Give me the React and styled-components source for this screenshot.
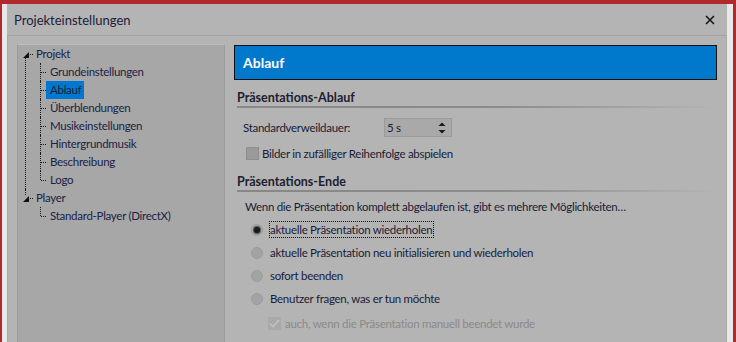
import React from 'react';
import styled, { createGlobalStyle } from 'styled-components';

const Global = createGlobalStyle`
  html, body { margin: 0; padding: 0; background: #b0292d; }
  body {
    font-family: Lato, "Noto Sans", sans-serif;
    font-size: 11.5px;
    letter-spacing: -0.28px;
    color: #181c34;
  }
  * { box-sizing: border-box; }
`;

const Frame = styled.div`
  width: 736px;
  height: 342px;
  background: #b0292d;
  padding: 4px 3px 0 2px;
  overflow: hidden;
`;

const Window = styled.div`
  height: 100%;
  background: #b4b4b4;
  border-left: 5px solid #e8e8e8;
  border-right: 6px solid #e8e8e8;
  display: flex;
  flex-direction: column;
`;

const TitleBar = styled.div`
  height: 31px;
  flex: none;
  display: flex;
  align-items: center;
  justify-content: space-between;
  padding: 0 12px 0 7px;
  font-size: 13px;
  letter-spacing: 0;
  color: #1c2038;
`;

const CloseBtn = styled.span`
  display: flex;
  width: 10px;
  height: 10px;
`;

const Body = styled.div`
  flex: 1;
  border-top: 1px solid #a4a4a4;
  border-left: 1px solid #a8a8a8;
  border-right: 1px solid #a8a8a8;
  padding: 8px 9px 0 9px;
  display: flex;
  gap: 9px;
  align-items: flex-start;
  min-height: 0;
`;

const TreePanel = styled.div`
  width: 208px;
  height: 320px;
  flex: none;
  background: #a7a7a7;
  border: 1px solid #9b9b9b;
  border-top-color: #bdbdbd;
`;

const TreeList = styled.ul`
  list-style: none;
  margin: 0;
  padding: 0;
`;

const RootNode = styled.li`
  position: relative;
  &::before {
    content: "";
    position: absolute;
    left: 7px;
    top: ${p => (p.$last ? '0' : '12px')};
    ${p => (p.$last ? 'height: 6px;' : 'bottom: 0;')}
    border-left: 1px dotted #1a1a1a;
  }
`;

const RootRow = styled.div`
  height: 18px;
  display: flex;
  align-items: center;
  padding-left: 5px;
  position: relative;
`;

const Expander = styled.svg`
  width: 6px;
  height: 6px;
  flex: none;
  position: relative;
  z-index: 1;
  margin-top: 1px;
`;

const Connector = styled.span`
  width: 3px;
  margin-left: 1px;
  border-top: 1px dotted #1a1a1a;
  flex: none;
`;

const ChildNode = styled.li`
  position: relative;
  height: 18px;
  display: flex;
  align-items: center;
  padding-left: 28px;
  &::before {
    content: "";
    position: absolute;
    left: 22px;
    top: 0;
    ${p => (p.$last ? 'height: 9px;' : 'bottom: 0;')}
    border-left: 1px dotted #1a1a1a;
  }
  &::after {
    content: "";
    position: absolute;
    left: 23px;
    top: 9px;
    width: 5px;
    border-top: 1px dotted #1a1a1a;
  }
`;

const NodeLabel = styled.span`
  height: 18px;
  line-height: 18px;
  padding: 0 3px 0 4px;
  margin-left: ${p => (p.$root ? '-1px' : '0')};
  background: ${p => (p.$selected ? '#0078d2' : 'transparent')};
  color: ${p => (p.$selected ? '#181c34' : '#1a2246')};
  white-space: nowrap;
`;

const Main = styled.div`
  width: 483px;
  flex: none;
  margin-top: 1px;
  display: flex;
  flex-direction: column;
`;

const Banner = styled.div`
  height: 35px;
  border: 1px solid #101010;
  background: #0079cc;
  color: #fff;
  font-weight: 700;
  font-size: 14px;
  letter-spacing: 0;
  display: flex;
  align-items: center;
  padding-left: 8px;
`;

const SectionTitle = styled.div`
  margin-top: ${p => p.$mt}px;
  margin-left: 3px;
  line-height: 15px;
  font-size: 12.5px;
  letter-spacing: 0;
  font-weight: 700;
  color: #1e2030;
  &::after {
    content: "";
    display: block;
    height: 2px;
    margin-top: 1px;
    background: linear-gradient(to right, #878787 0%, #8c8c8c 55%, #b4b4b4 100%);
  }
`;

const FieldRow = styled.div`
  margin-top: 10px;
  padding-left: 9px;
  display: flex;
  align-items: center;
  height: 19px;
`;

const FieldLabel = styled.span`
  width: 141px;
  flex: none;
`;

const Spinner = styled.div`
  width: 68px;
  height: 19px;
  background: #a9a9a9;
  border: 1px solid #9a9a9a;
  display: flex;
  align-items: center;
  justify-content: space-between;
  padding: 0 5px 0 2px;
`;

const CheckRow = styled.label`
  margin-top: ${p => p.$mt}px;
  padding-left: ${p => p.$pl}px;
  height: 16px;
  display: flex;
  align-items: center;
  gap: ${p => p.$gap}px;
  color: ${p => (p.$disabled ? '#8a8a8a' : '#181c34')};
`;

const Box = styled.span`
  width: 13px;
  height: 13px;
  flex: none;
  background: ${p => (p.$disabled ? '#a9a9a9' : '#9a9a9a')};
  border: 1px solid ${p => (p.$disabled ? '#a9a9a9' : '#8e8e8e')};
  display: flex;
  align-items: center;
  justify-content: center;
`;

const Paragraph = styled.div`
  margin-top: 7px;
  padding-left: 11px;
  line-height: 16px;
`;

const RadioGroup = styled.div`
  margin-top: 3px;
  display: flex;
  flex-direction: column;
`;

const RadioRow = styled.div`
  height: 23px;
  padding-left: 17px;
  display: flex;
  align-items: center;
`;

const RadioCircle = styled.span`
  width: 12px;
  height: 12px;
  flex: none;
  border-radius: 50%;
  background: #a3a3a3;
  border: 1px solid #9c9c9c;
  margin-right: 6px;
  display: flex;
  align-items: center;
  justify-content: center;
  &::after {
    content: "";
    display: ${p => (p.$checked ? 'block' : 'none')};
    width: 6px;
    height: 6px;
    border-radius: 50%;
    background: #1a1a1a;
    box-shadow: 0 0 0 1px #555;
  }
`;

const RadioLabel = styled.span`
  border: 1px dotted ${p => (p.$focus ? '#111' : 'transparent')};
  line-height: 15px;
  padding: 0 1px 0 0;
`;

const Tri = () => (
  <Expander viewBox="0 0 6 6">
    <path d="M6 0 L6 6 L0 6 Z" fill="#111" />
  </Expander>
);

export default function App() {
  const projektChildren = [
    'Grundeinstellungen',
    'Ablauf',
    'Überblendungen',
    'Musikeinstellungen',
    'Hintergrundmusik',
    'Beschreibung',
    'Logo',
  ];
  const radios = [
    'aktuelle Präsentation wiederholen',
    'aktuelle Präsentation neu initialisieren und wiederholen',
    'sofort beenden',
    'Benutzer fragen, was er tun möchte',
  ];
  return (
    <>
      <Global />
      <Frame>
        <Window>
          <TitleBar>
            <span>Projekteinstellungen</span>
            <CloseBtn>
              <svg width="10" height="10" viewBox="0 0 10 10">
                <path d="M1 1 L9 9 M9 1 L1 9" stroke="#1a1a1a" strokeWidth="1.7" />
              </svg>
            </CloseBtn>
          </TitleBar>
          <Body>
            <TreePanel>
              <TreeList>
                <RootNode>
                  <RootRow>
                    <Tri />
                    <Connector />
                    <NodeLabel $root>Projekt</NodeLabel>
                  </RootRow>
                  <TreeList>
                    {projektChildren.map((c, i) => (
                      <ChildNode key={c} $last={i === projektChildren.length - 1}>
                        <NodeLabel $selected={c === 'Ablauf'}>{c}</NodeLabel>
                      </ChildNode>
                    ))}
                  </TreeList>
                </RootNode>
                <RootNode $last>
                  <RootRow>
                    <Tri />
                    <Connector />
                    <NodeLabel $root>Player</NodeLabel>
                  </RootRow>
                  <TreeList>
                    <ChildNode $last>
                      <NodeLabel>Standard-Player (DirectX)</NodeLabel>
                    </ChildNode>
                  </TreeList>
                </RootNode>
              </TreeList>
            </TreePanel>
            <Main>
              <Banner>Ablauf</Banner>
              <SectionTitle $mt={10}>Präsentations-Ablauf</SectionTitle>
              <FieldRow>
                <FieldLabel>Standardverweildauer:</FieldLabel>
                <Spinner>
                  <span>5 s</span>
                  <svg width="8" height="14" viewBox="0 0 8 14">
                    <path d="M0.5 5 L4 1.5 L7.5 5 Z" fill="#1a1a1a" />
                    <path d="M0.5 9 L4 12.5 L7.5 9 Z" fill="#1a1a1a" />
                  </svg>
                </Spinner>
              </FieldRow>
              <CheckRow $mt={8} $pl={12} $gap={3}>
                <Box />
                <span>Bilder in zufälliger Reihenfolge abspielen</span>
              </CheckRow>
              <SectionTitle $mt={13}>Präsentations-Ende</SectionTitle>
              <Paragraph>
                Wenn die Präsentation komplett abgelaufen ist, gibt es mehrere Möglichkeiten…
              </Paragraph>
              <RadioGroup>
                {radios.map((r, i) => (
                  <RadioRow key={r}>
                    <RadioCircle $checked={i === 0} />
                    <RadioLabel $focus={i === 0}>{r}</RadioLabel>
                  </RadioRow>
                ))}
              </RadioGroup>
              <CheckRow $mt={5} $pl={34} $gap={4} $disabled>
                <Box $disabled>
                  <svg width="11" height="9" viewBox="0 0 11 9">
                    <path d="M1 4.5 L4 7.5 L10 1" stroke="#c2c2c2" strokeWidth="1.6" fill="none" />
                  </svg>
                </Box>
                <span>auch, wenn die Präsentation manuell beendet wurde</span>
              </CheckRow>
            </Main>
          </Body>
        </Window>
      </Frame>
    </>
  );
}
